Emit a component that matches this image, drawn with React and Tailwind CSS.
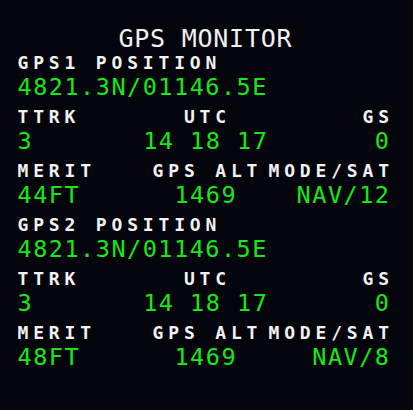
import React from "react";

const FONT = { fontFamily: '"DejaVu Sans Mono", "Liberation Mono", monospace' };

const LBL = "text-[18px] font-bold tracking-[4.83px] text-[#f2f2f2]";
const DAT = "text-[23.5px] tracking-[1.5px] text-[#18e818]";

function Row({ kind, left, center, right }) {
  const cls = kind === "label" ? LBL : DAT;
  const rightMr = kind === "label" ? "mr-[-4.83px]" : "mr-[-1.5px]";
  const centerPl = kind === "label" ? "pl-[8.3px]" : "pl-[5px]";
  return (
    <div
      className={`grid h-[24px] grid-cols-[minmax(0,1fr)_auto_minmax(0,1fr)] items-center whitespace-pre leading-[24px] ${cls}`}
    >
      <span className="justify-self-start">{left}</span>
      <span className={`justify-self-center ${centerPl}`}>{center}</span>
      <span className={`justify-self-end ${rightMr}`}>{right}</span>
    </div>
  );
}

function Section({ name, track, utc, gs, merit, alt, mode }) {
  return (
    <>
      <div className="flex flex-col">
        <Row kind="label" left={name} />
        <Row kind="data" left="4821.3N/01146.5E" />
      </div>
      <div className="flex flex-col">
        <Row kind="label" left="TTRK" center="UTC" right="GS" />
        <Row kind="data" left={track} center={utc} right={gs} />
      </div>
      <div className="flex flex-col">
        <Row kind="label" left="MERIT" center="GPS ALT" right="MODE/SAT" />
        <Row kind="data" left={merit} center={alt} right={mode} />
      </div>
    </>
  );
}

export default function App() {
  return (
    <div className="h-[410px] w-[413px] overflow-hidden bg-[#04040c]" style={FONT}>
      <div className="flex flex-col gap-[6px] pl-[17.5px] pr-[24px] pt-[27px]">
        <div className="flex flex-col">
          <div className="grid h-[24px] grid-cols-[minmax(0,1fr)_auto_minmax(0,1fr)] items-center whitespace-pre text-[25px] leading-[24px] tracking-[0.75px] text-[#f2f2f2]">
            <span />
            <span className="pl-[4.3px]">GPS MONITOR</span>
            <span />
          </div>
          <Row kind="label" left="GPS1 POSITION" />
          <Row kind="data" left="4821.3N/01146.5E" />
        </div>
        <div className="flex flex-col">
          <Row kind="label" left="TTRK" center="UTC" right="GS" />
          <Row kind="data" left="3" center="14 18 17" right="0" />
        </div>
        <div className="flex flex-col">
          <Row kind="label" left="MERIT" center="GPS ALT" right="MODE/SAT" />
          <Row kind="data" left="44FT" center="1469" right="NAV/12" />
        </div>
        <Section
          name="GPS2 POSITION"
          track="3"
          utc="14 18 17"
          gs="0"
          merit="48FT"
          alt="1469"
          mode="NAV/8"
        />
      </div>
    </div>
  );
}
